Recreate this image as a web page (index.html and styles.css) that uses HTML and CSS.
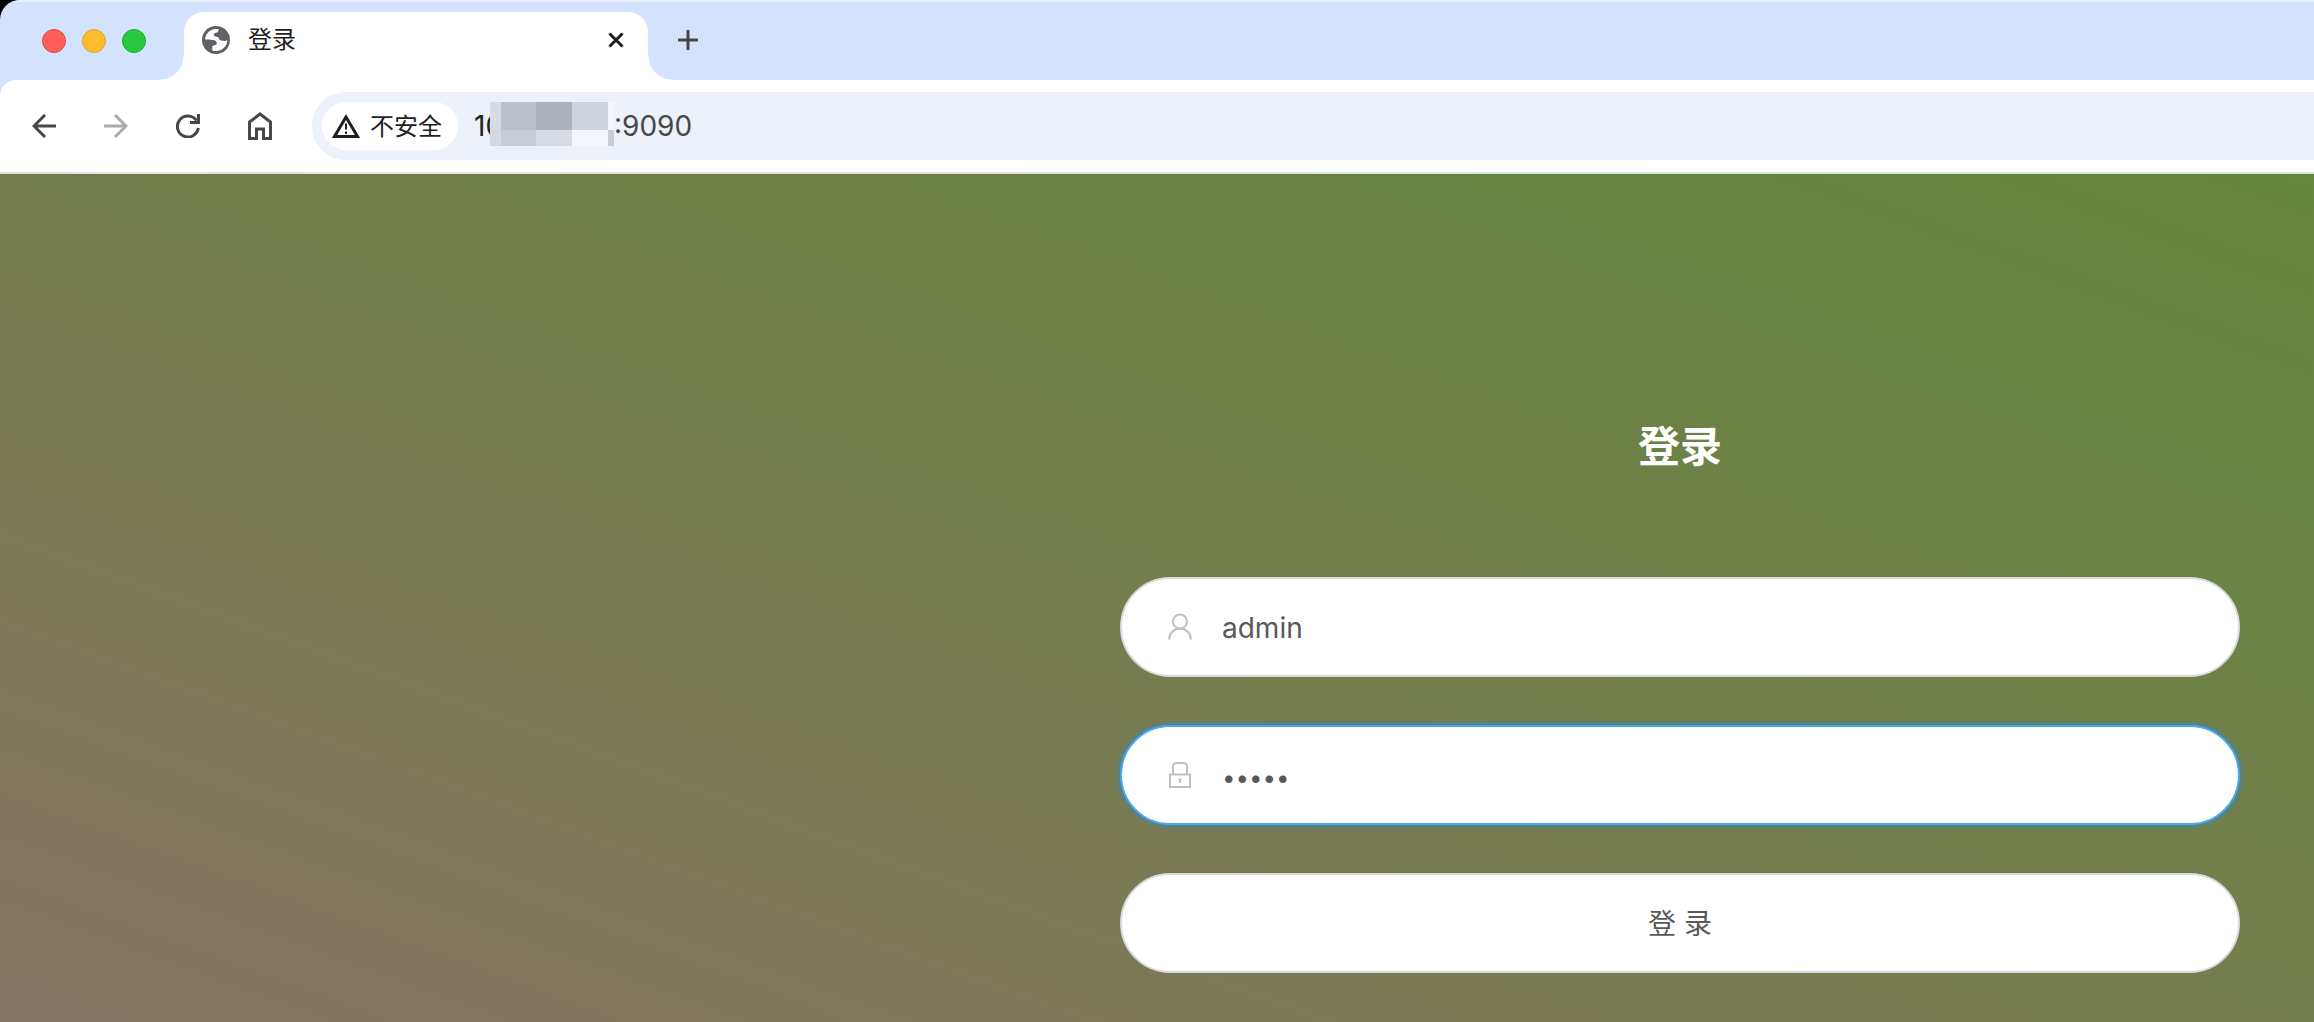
FILE: index.html
```html
<!DOCTYPE html>
<html lang="zh-CN">
<head>
<meta charset="utf-8">
<meta name="viewport" content="width=device-width, initial-scale=1">
<title>登录</title>
<link rel="stylesheet" href="styles.css">
</head>
<body>
<div class="browser">
  <header class="tabstrip">
    <div class="lights">
      <span class="light light-close"></span>
      <span class="light light-min"></span>
      <span class="light light-max"></span>
    </div>
    <div class="tab">
      <svg class="globe" viewBox="0 0 28 28" aria-hidden="true">
        <circle cx="14" cy="14" r="14" fill="#5f6368"/>
        <path fill="#fff" d="M17 3.400C15 2.800 12 2.800 9.500 3.900C5.800 5.500 3.400 8.900 3 13.200C5 13.800 8 13.500 10.500 14C13.500 14.200 15 15.500 14.800 17.500C14.500 19.500 12 19 10.600 20C10 21 10.400 22.500 10.400 24.500C14.500 25.800 19 24.700 22 21.800C24.300 19.600 25.300 17 25.200 14C24 15.200 22 15 20.500 14.800C18.500 14.600 16.800 13.800 16.500 11.500C15.500 10.300 12.500 11 11.800 9.200C11.500 7.500 13 6.500 15 6.500C16.500 6 16 4.500 17 3.400Z"/>
      </svg>
      <span class="tab-title">登录</span>
      <button class="icon-button" type="button" aria-label="关闭标签页">
        <svg width="16" height="16" viewBox="0 0 16 16"><path d="M1.500 1.500L14.500 14.500M14.500 1.500L1.500 14.500" stroke="#1f1f1f" stroke-width="3" fill="none"/></svg>
      </button>
    </div>
    <button class="icon-button new-tab" type="button" aria-label="新标签页">
      <svg width="20" height="20" viewBox="0 0 20 20"><path d="M10 0V20M0 10H20" stroke="#474747" stroke-width="3" fill="none"/></svg>
    </button>
  </header>
  <nav class="toolbar">
    <button class="icon-button" type="button" aria-label="后退">
      <svg width="24" height="24" viewBox="0 0 24 24"><path d="M24 12H2M13 1L2 12L13 23" stroke="#474747" stroke-width="3" fill="none"/></svg>
    </button>
    <button class="icon-button" type="button" aria-label="前进" disabled>
      <svg width="24" height="24" viewBox="0 0 24 24"><path d="M0 12H22M11 1L22 12L11 23" stroke="#ababab" stroke-width="3" fill="none"/></svg>
    </button>
    <button class="icon-button" type="button" aria-label="重新加载">
      <svg width="24" height="24" viewBox="0 0 24 24"><path d="M20.500 6.500A10.500 10.500 0 1 0 22.300 14M22.500 0V8.500H14" stroke="#474747" stroke-width="3" fill="none"/></svg>
    </button>
    <button class="icon-button" type="button" aria-label="主页">
      <svg width="24" height="28" viewBox="0 0 24 28"><path d="M1.500 26.500V10L12 2L22.500 10V26.500H15.500V17H8.500V26.500Z" stroke="#474747" stroke-width="3" fill="none"/></svg>
    </button>
    <div class="omnibox">
      <button class="security" type="button">
        <svg width="28" height="24" viewBox="0 0 28 24" aria-hidden="true"><path d="M14 3L25.500 22.500H2.500Z" stroke="#1f1f1f" stroke-width="3" fill="none"/><path d="M14 9.500V15.500M14 17.500V20" stroke="#1f1f1f" stroke-width="2"/></svg>
        <span class="security-text">不安全</span>
      </button>
      <span class="url"><span class="host">10</span><span class="mosaic"><i class="m1"></i><i class="m2"></i><i class="m3"></i><i class="m4"></i><i class="m5"></i><i class="m6"></i><i class="m7"></i><i class="m1"></i><i class="m5"></i><i class="m7"></i></span><span class="port">:9090</span></span>
    </div>
  </nav>
  <main class="page">
    <form class="login">
      <h1>登录</h1>
      <div class="field">
        <svg width="24" height="28" viewBox="0 0 24 28" aria-hidden="true"><circle cx="12" cy="8.500" r="7" fill="none" stroke="#c0c0c0" stroke-width="2"/><path d="M1.200 26.500C1.200 20 6 15.500 12 15.500S22.800 20 22.800 26.500" fill="none" stroke="#c0c0c0" stroke-width="2"/></svg>
        <input type="text" aria-label="用户名" value="admin">
      </div>
      <div class="field field-active">
        <svg width="24" height="28" viewBox="0 0 24 28" aria-hidden="true"><path d="M2 13.500H22V26H2ZM5 13.500V5.500Q5 2 8.500 2H15.500Q19 2 19 5.500V13.500" fill="none" stroke="#c0c0c0" stroke-width="2"/><path d="M12 18V22M10.500 18.500H13.500" stroke="#c0c0c0" stroke-width="2"/></svg>
        <input class="password" type="password" aria-label="密码" value="admin">
      </div>
      <button class="submit" type="submit">登 录</button>
    </form>
  </main>
</div>
</body>
</html>
```
FILE: styles.css
```css
* { box-sizing: border-box; }

body {
  margin: 0;
  background: #000;
  font-family: Inter, "Noto Sans CJK SC", sans-serif;
}

button, input { font: inherit; }

.browser {
  display: flex;
  flex-direction: column;
  min-height: 100vh;
  overflow: hidden;
  border-radius: 20px 0 0 0;
  background: #d3e2fd;
}

.tabstrip {
  display: flex;
  align-items: flex-end;
  height: 80px;
  border-top: 2px solid #e6eefd;
}

.lights {
  display: flex;
  gap: 16px;
  width: 184px;
  padding: 0 0 27px 42px;
}

.light {
  width: 24px;
  height: 24px;
  border: 1px solid #e2463f;
  border-radius: 50%;
  background: #ff5f57;
}

.light-min { border-color: #e0a028; background: #febc2e; }
.light-max { border-color: #1dad2b; background: #28c840; }

.tab {
  position: relative;
  display: flex;
  align-items: center;
  gap: 18px;
  width: 464px;
  height: 68px;
  padding: 0 20px 12px 18px;
  border-radius: 20px 20px 0 0;
  background: #fff;
}

.tab::before,
.tab::after {
  content: "";
  position: absolute;
  bottom: 0;
  width: 24px;
  height: 24px;
}

.tab::before {
  right: 100%;
  background: radial-gradient(circle at 0 0, transparent 23px, #fff 24px);
}

.tab::after {
  left: 100%;
  background: radial-gradient(circle at 100% 0, transparent 23px, #fff 24px);
}

.globe { width: 28px; height: 28px; }

.tab-title {
  flex: 1;
  font-size: 24px;
  line-height: 32px;
  color: #1f1f1f;
}

.icon-button {
  display: flex;
  align-items: center;
  justify-content: center;
  width: 24px;
  height: 28px;
  padding: 0;
  border: 0;
  background: none;
}

.new-tab { margin: 0 0 26px 28px; }

.toolbar {
  display: flex;
  align-items: center;
  gap: 48px;
  height: 94px;
  padding: 0 0 0 32px;
  border-bottom: 2px solid #e1e3e1;
  border-radius: 16px 0 0 0;
  background: #fff;
}

.omnibox {
  display: flex;
  flex: 1;
  align-items: center;
  gap: 16px;
  height: 68px;
  margin-left: -8px;
  padding-left: 10px;
  border-radius: 34px 0 0 34px;
  background: #ecf1fa;
}

.security {
  display: flex;
  align-items: center;
  gap: 10px;
  width: 136px;
  height: 48px;
  padding: 0 0 0 10px;
  border: 0;
  border-radius: 24px;
  background: #fff;
  color: #1f1f1f;
  font-size: 24px;
  white-space: nowrap;
}

.security-text { padding-bottom: 4px; }

.url {
  display: flex;
  align-items: center;
  font-size: 28px;
  color: #474747;
}

.host {
  width: 16px;
  color: #1f1f1f;
}

/* Covers the middle of the address, over the end of the host text. */
.mosaic {
  position: relative;
  display: grid;
  grid-template-columns: 11px 35px 36px 36px 6px;
  grid-template-rows: 28px 16px;
  margin-top: -4px;
}

.m1 { background: #d7dbe4; }
.m2 { background: #bcc1c9; }
.m3 { background: #adb1b9; }
.m4 { background: #cfd4dc; }
.m5 { background: #f4f6fc; }
.m6 { background: #d3d8e1; }
.m7 { background: #c8ccd5; }

.page {
  flex: 1;
  display: flex;
  align-items: flex-start;
  justify-content: flex-end;
  padding: 241px 74px 49px;
  background: linear-gradient(to top right, #847361, #64873a);
}

.login {
  display: flex;
  flex: 0 1 1120px;
  flex-direction: column;
  gap: 48px;
}

h1 {
  margin: 0 0 50px;
  font-size: 42px;
  line-height: 64px;
  font-weight: 700;
  text-align: center;
  color: #fff;
}

.field,
.submit {
  height: 100px;
  border: 2px solid #d9d9d9;
  border-radius: 50px;
  background: #fff;
  color: #595959;
  font-size: 28px;
}

.submit { padding: 0 0 2px; }

.field {
  display: flex;
  align-items: center;
  gap: 30px;
  padding: 0 46px;
}

.field-active {
  border-color: #40a9ff;
  box-shadow: 0 0 0 4px rgba(24, 144, 255, 0.2);
}

.field input {
  flex: 1;
  min-width: 0;
  padding: 2px 0 0;
  border: 0;
  outline: 0;
  background: none;
  color: inherit;
}

.field .password { font-size: 24px; padding-top: 4px; }
```
